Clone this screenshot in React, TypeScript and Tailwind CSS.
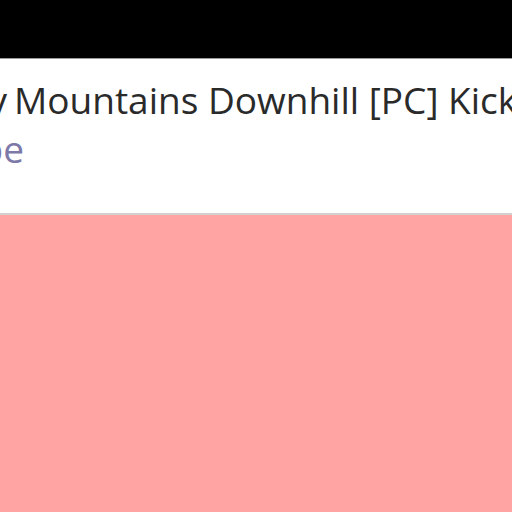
import React from 'react';

export default function App() {
  return (
    <div className="w-[512px] h-[512px] overflow-hidden flex flex-col bg-[#ffa3a3]">
      <div className="h-[59px] bg-black border-b border-[#9a9a9a] shrink-0" />
      <div
        className="h-[156px] bg-white border-b-2 border-[#d4cfcf] shrink-0 overflow-hidden pt-[16px] text-[37px] leading-[49px] whitespace-nowrap"
        style={{ fontFamily: '"Open Sans", sans-serif' }}
      >
        <div className="flex text-[#2a2a2a]">
          <span className="w-[7px] shrink-0 flex justify-end">Snowy</span>
          <span className="ml-[7px]">Mountains Downhill [PC] Kickstarter</span>
        </div>
        <div className="flex text-[#7c78a8]">
          <span className="w-[24px] shrink-0 flex justify-end">Subscribe</span>
        </div>
      </div>
      <div className="flex-1" />
    </div>
  );
}
